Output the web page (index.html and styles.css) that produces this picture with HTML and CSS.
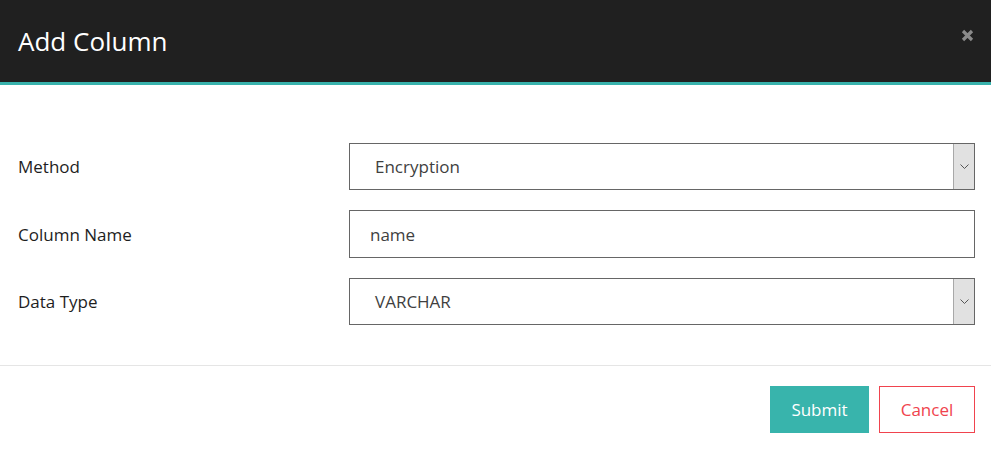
FILE: index.html
```html
<!DOCTYPE html>
<html>
<head>
<meta charset="utf-8">
<link rel="stylesheet" href="styles.css">
</head>
<body>
<div class="modal">
  <div class="modal-header">
    <h1 class="title">Add Column</h1>
    <span class="close"><svg width="13" height="13" viewBox="0 0 13 13"><path d="M2 2 L11 11 M11 2 L2 11" stroke="#8a8a8a" stroke-width="3.2" stroke-linecap="butt"/></svg></span>
  </div>
  <div class="modal-body">
    <div class="row">
      <label class="label">Method</label>
      <div class="field select">
        <span class="value">Encryption</span>
        <span class="arrow"><svg width="9" height="5" viewBox="0 0 9 5"><path d="M0.5 0.5 L4.5 4.5 L8.5 0.5" fill="none" stroke="#555" stroke-width="1"/></svg></span>
      </div>
    </div>
    <div class="row">
      <label class="label">Column Name</label>
      <div class="field input"><span class="value">name</span></div>
    </div>
    <div class="row">
      <label class="label">Data Type</label>
      <div class="field select">
        <span class="value">VARCHAR</span>
        <span class="arrow"><svg width="9" height="5" viewBox="0 0 9 5"><path d="M0.5 0.5 L4.5 4.5 L8.5 0.5" fill="none" stroke="#555" stroke-width="1"/></svg></span>
      </div>
    </div>
  </div>
  <div class="modal-footer">
    <button class="btn btn-submit">Submit</button>
    <button class="btn btn-cancel">Cancel</button>
  </div>
</div>
</body>
</html>
```
FILE: styles.css
```css
* { box-sizing: border-box; }
html, body { margin: 0; padding: 0; background: #fff; }
body { font-family: "Open Sans", "Noto Sans", sans-serif; color: #222; }
.modal { width: 991px; }
.modal-header {
  height: 85px;
  background: #202020;
  border-bottom: 3px solid #38b2ac;
  display: flex;
  align-items: center;
  justify-content: space-between;
  padding: 0 17px 0 18px;
}
.title {
  margin: 0;
  font-size: 26px;
  font-weight: 400;
  color: #fff;
}
.close {
  display: flex;
  margin-top: -12px;
}
.modal-body {
  padding: 58px 16px 40px 18px;
  display: flex;
  flex-direction: column;
  gap: 20px;
}
.row { display: flex; align-items: center; }
.label { width: 331px; font-size: 17px; color: #1e1e1e; }
.field {
  flex: 1;
  height: 47px;
  border: 1px solid #666;
  display: flex;
  align-items: center;
  font-size: 17px;
  color: #3f3f3f;
}
.select .value { padding-left: 25px; flex: 1; }
.input .value { padding-left: 20px; }
.input { height: 48px; }
.arrow {
  width: 21px;
  align-self: stretch;
  background: #e1e1e1;
  border-left: 1px solid #a8a8a8;
  display: flex;
  align-items: center;
  justify-content: center;
}
.modal-footer {
  border-top: 1px solid #e5e5e5;
  padding: 20px 16px 0 0;
  display: flex;
  justify-content: flex-end;
  gap: 10px;
}
.btn {
  height: 47px;
  font-family: inherit;
  font-size: 17px;
  padding: 0;
  cursor: pointer;
}
.btn-submit { width: 99px; background: #38b4ac; color: #fff; border: none; }
.btn-cancel { width: 96px; background: #fff; color: #f0434e; border: 1px solid #f0434e; }
```
